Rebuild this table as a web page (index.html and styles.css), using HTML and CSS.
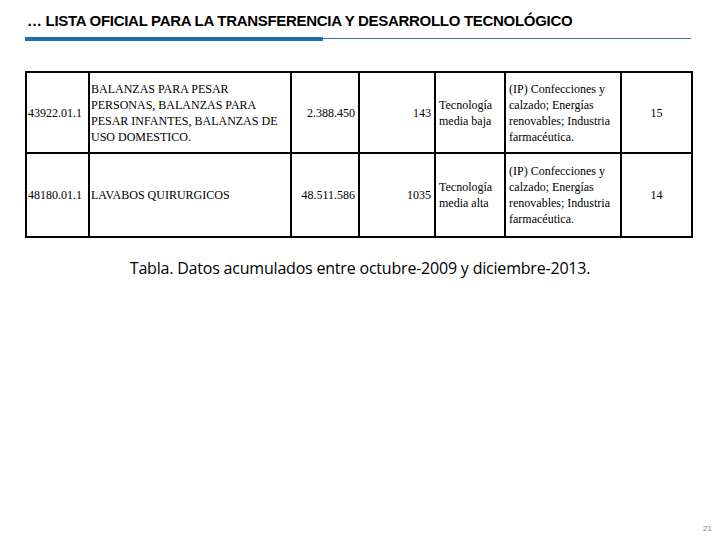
FILE: index.html
```html
<!DOCTYPE html>
<html lang="es">
<head>
<meta charset="utf-8">
<link rel="stylesheet" href="styles.css">
</head>
<body>
<div class="slide">
  <header class="head">
    <h1 class="title">… LISTA OFICIAL PARA LA TRANSFERENCIA Y DESARROLLO TECNOLÓGICO</h1>
    <div class="rule"><span class="rule-thick"></span><span class="rule-thin"></span></div>
  </header>
  <table class="data">
    <colgroup>
      <col class="c1"><col class="c2"><col class="c3"><col class="c4"><col class="c5"><col class="c6"><col class="c7">
    </colgroup>
    <tr class="r1">
      <td class="code">43922.01.1</td>
      <td class="desc">BALANZAS PARA PESAR PERSONAS, BALANZAS PARA PESAR INFANTES, BALANZAS DE USO DOMESTICO.</td>
      <td class="num">2.388.450</td>
      <td class="num">143</td>
      <td class="txt">Tecnología media baja</td>
      <td class="txt">(IP) Confecciones y calzado; Energías renovables; Industria farmacéutica.</td>
      <td class="ctr">15</td>
    </tr>
    <tr class="r2">
      <td class="code">48180.01.1</td>
      <td class="desc">LAVABOS QUIRURGICOS</td>
      <td class="num">48.511.586</td>
      <td class="num">1035</td>
      <td class="txt">Tecnología media alta</td>
      <td class="txt">(IP) Confecciones y calzado; Energías renovables; Industria farmacéutica.</td>
      <td class="ctr">14</td>
    </tr>
  </table>
  <p class="caption">Tabla. Datos acumulados entre octubre-2009 y diciembre-2013.</p>
  <div class="page">21</div>
</div>
</body>
</html>
```

FILE: styles.css
```css
html, body {
  margin: 0;
  padding: 0;
  background: #ffffff;
}
.slide {
  width: 720px;
  height: 540px;
  position: relative;
  box-sizing: border-box;
  padding-top: 11px;
}
.head {
  margin-left: 25px;
  width: 666px;
}
.title {
  margin: 0 0 0 2px;
  font-family: "Liberation Sans", Arial, sans-serif;
  font-weight: bold;
  font-size: 15px;
  line-height: 20px;
  letter-spacing: -0.3px;
  color: #000000;
  white-space: nowrap;
}
.rule {
  display: flex;
  align-items: center;
  margin-top: 5px;
  height: 5px;
}
.rule-thick {
  width: 298px;
  height: 4px;
  background: #1f6fb7;
}
.rule-thin {
  flex: 1;
  height: 1px;
  background: #2e75b6;
}
.data {
  margin: 30px 0 0 25px;
  border-collapse: collapse;
  table-layout: fixed;
  width: 666px;
  font-family: "Liberation Serif", "Times New Roman", serif;
  font-size: 12px;
  line-height: 16px;
  color: #000000;
}
.c1 { width: 63px; }
.c2 { width: 202px; }
.c3 { width: 68px; }
.c4 { width: 76px; }
.c5 { width: 70px; }
.c6 { width: 116px; }
.c7 { width: 71px; }
.data td {
  border: 2px solid #000000;
  vertical-align: middle;
  padding: 0 3px;
}
.r1 td { height: 79px; }
.r2 td { height: 82px; }
.data td.code { padding: 0 1px; }
.data td.desc { padding-left: 1px; }
.num { text-align: right; }
.ctr { text-align: center; }
.caption {
  margin: 20px 0 0 0;
  text-align: center;
  font-family: "Open Sans", "Liberation Sans", sans-serif;
  font-size: 16px;
  line-height: 20px;
  letter-spacing: -0.2px;
  color: #000000;
}
.page {
  position: absolute;
  right: 8px;
  bottom: 7px;
  font-family: "Liberation Sans", Arial, sans-serif;
  font-size: 8px;
  color: #7f7f7f;
}
```
